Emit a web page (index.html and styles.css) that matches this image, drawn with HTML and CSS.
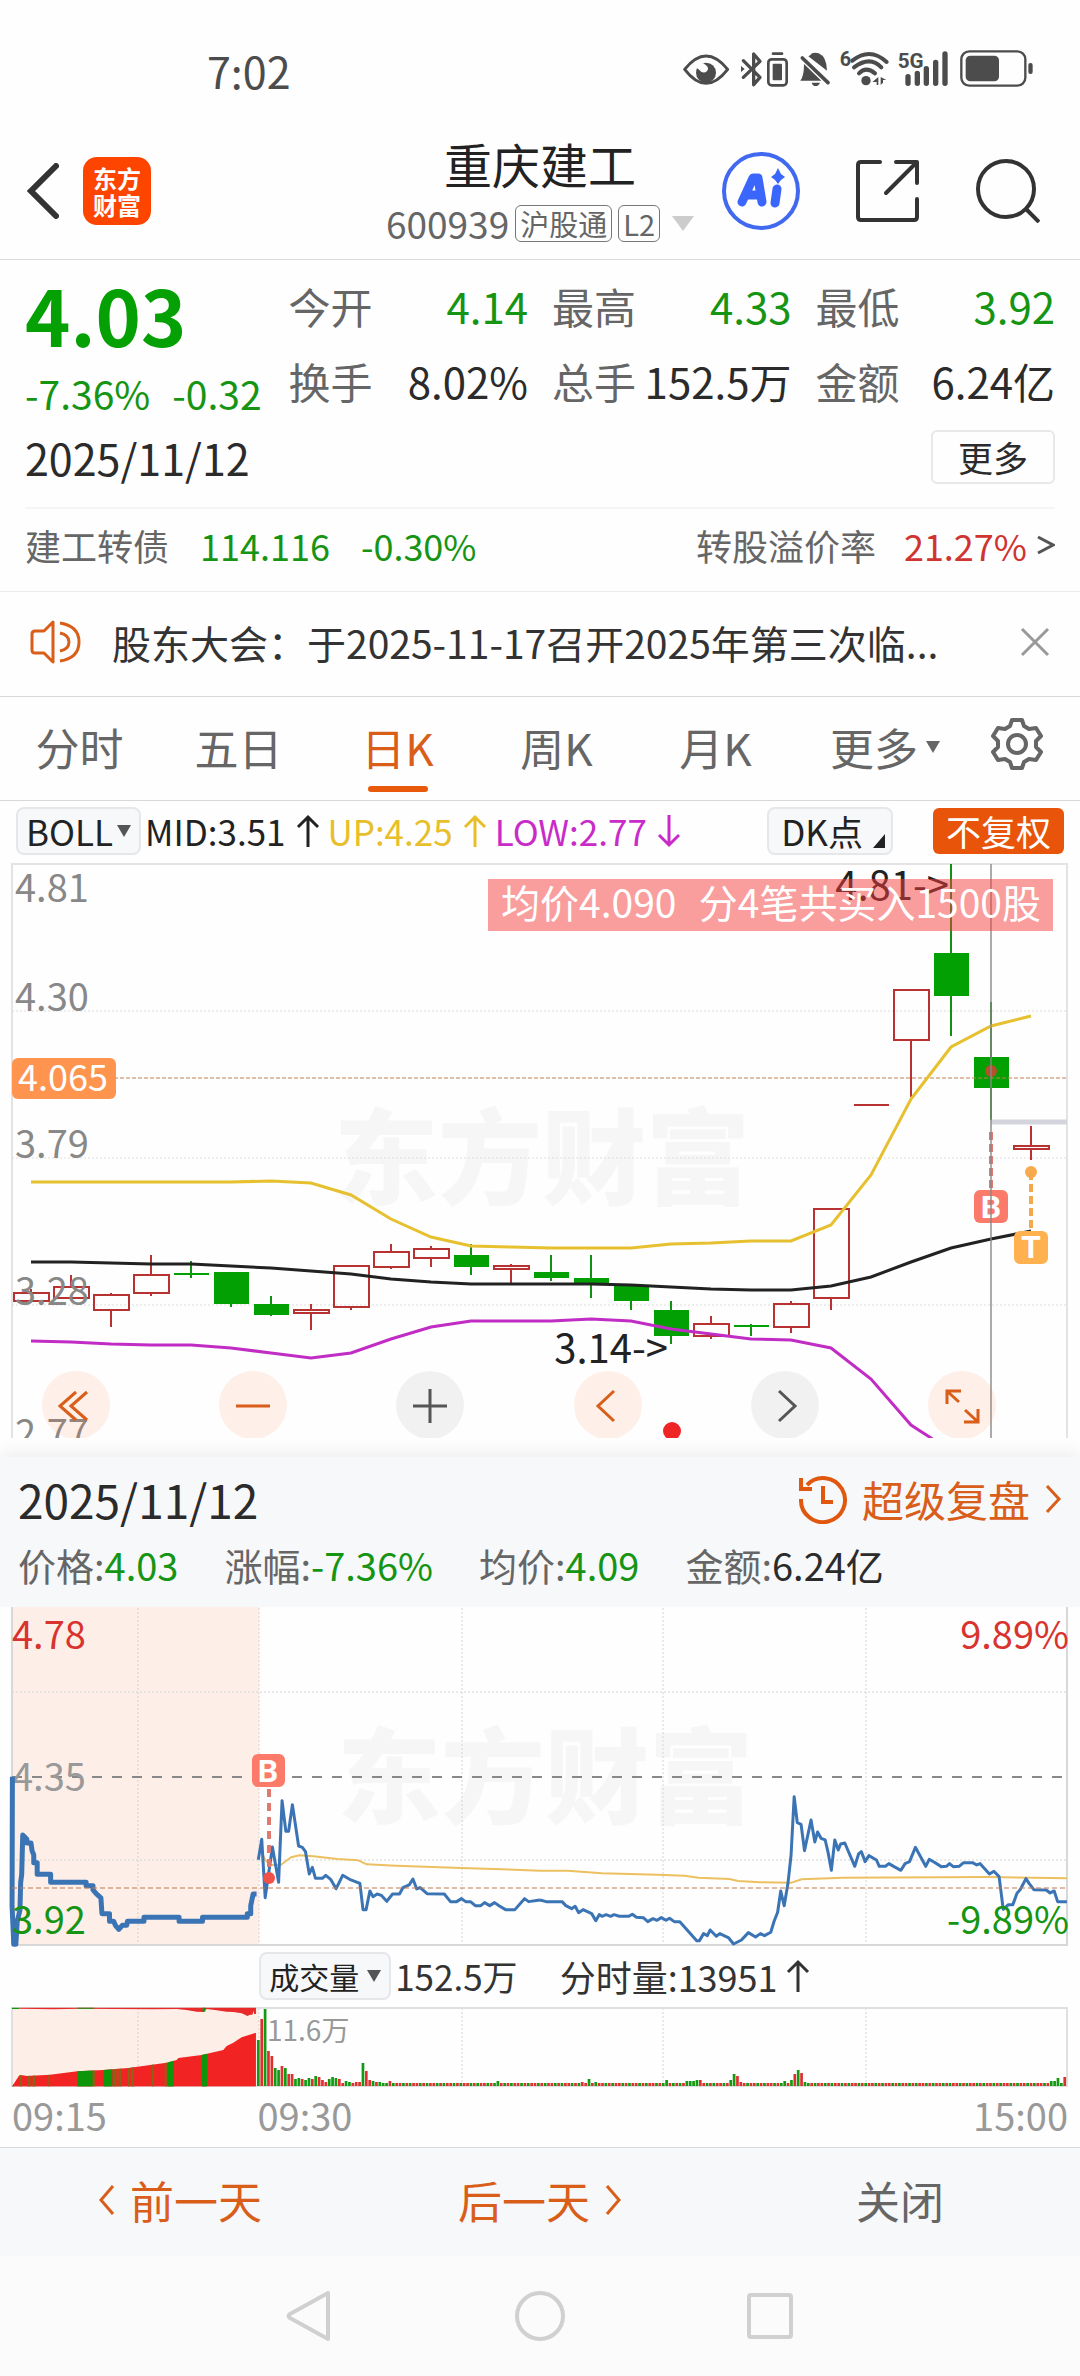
FILE: index.html
```html
<!DOCTYPE html>
<html lang="zh-CN">
<head>
<meta charset="utf-8">
<meta name="viewport" content="width=device-width, initial-scale=1">
<title>重庆建工 600939</title>
<link rel="stylesheet" href="styles.css">
</head>
<body>
<div class="status">
  <span class="clock">7:02</span>
  <svg class="status-icons" viewBox="0 0 1200 240" aria-hidden="true">
    <g fill="none" stroke="#4c4c4c" stroke-width="9" stroke-linecap="round" stroke-linejoin="round">
      <path d="M74 118Q138 38 203 118Q138 202 74 118Z"/>
      <path d="M250 92L300 142L281 164V72L300 94L250 142" stroke-width="10"/>
      <rect x="325" y="88" width="55" height="78" rx="10" stroke-width="8"/>
      <path d="M339 71H366" stroke-width="8"/>
      <path d="M427 84L504 158" stroke-width="11"/>
      <path d="M577 92Q630 50 680 96M582 112Q630 76 664 112M597 130Q618 108 645 130" stroke-width="12"/>
      <path d="M744 140V160M772 130V160M799 116V160M827 97V160M855 72V160" stroke-width="16"/>
      <rect x="904" y="64" width="192" height="103" rx="24" stroke-width="7"/>
    </g>
    <g fill="#4c4c4c">
      <circle cx="138" cy="128" r="30"/>
      <path d="M243 108L254 117L243 126Z"/>
      <rect x="338" y="101" width="28" height="50" rx="3"/>
      <path d="M432 102L484 152H421Q432 140 432 102ZM445 79Q452 76 456 70Q466 66 476 70Q500 80 501 122ZM455 158H480Q476 168 467 168Q458 168 455 158Z"/>
      <circle cx="618" cy="152" r="14"/>
      <path d="M655 141V165H650V156H637ZM662 165V141L679 150H669V158Z"/>
      <rect x="917" y="77" width="100" height="77" rx="14"/>
      <rect x="1105" y="99" width="13" height="33" rx="6"/>
    </g>
    <path d="M104 100H130Q150 112 142 122Q130 134 118 120Q112 112 104 116Z" fill="#fff"/>
    <text class="net" x="539" y="107" font-size="60">6</text>
    <text class="net" x="713" y="115" font-size="62">5G</text>
  </svg>
</div>

<header class="header">
  <div class="header-left">
    <button class="icon-btn" aria-label="返回"><svg width="32" height="56" viewBox="0 0 32 56"><path d="M29 3L4 28L29 53" fill="none" stroke="#333" stroke-width="6" stroke-linecap="round"/></svg></button>
    <a class="logo" href="#">东方<br>财富</a>
  </div>
  <div class="header-mid">
    <h1>重庆建工</h1>
    <div class="code"><span>600939</span><span class="badge">沪股通</span><span class="badge">L2</span><svg width="22" height="16" viewBox="0 0 22 16"><path d="M0 1H22L11 16Z" fill="#ccc"/></svg></div>
  </div>
  <div class="header-right">
    <button class="icon-btn" aria-label="AI"><svg width="78" height="78" viewBox="0 0 78 78"><circle cx="39" cy="39" r="37" fill="none" stroke="#4169f0" stroke-width="4"/><g fill="none" stroke="#3a66fb" stroke-width="9" stroke-linecap="round" stroke-linejoin="round"><path d="M20 50L31 26H36L40 50M26 43H38M55 37L53 51"/></g><path d="M56 16L59 22L63 25L59 28L56 32L53 28L49 25L53 22Z" fill="#3a66fb"/></svg></button>
    <button class="icon-btn" aria-label="分享"><svg width="64" height="64" viewBox="0 0 64 64"><path d="M24 3H5Q2 3 2 6V58Q2 61 5 61H58Q61 61 61 58V40M40 3H61V24M60 4L30 34" fill="none" stroke="#333" stroke-width="4" stroke-linecap="round" stroke-linejoin="round"/></svg></button>
    <button class="icon-btn" aria-label="搜索"><svg width="64" height="64" viewBox="0 0 64 64"><circle cx="30" cy="30" r="28" fill="none" stroke="#333" stroke-width="4"/><path d="M50 50L63 63" stroke="#333" stroke-width="4"/></svg></button>
  </div>
</header>

<section class="quote">
  <div class="quote-grid">
    <div class="now">
      <div class="price green">4.03</div>
      <div class="change green"><span>-7.36%</span><span>-0.32</span></div>
    </div>
    <dl>
      <div><dt>今开</dt><dd class="green">4.14</dd></div>
      <div><dt>换手</dt><dd>8.02%</dd></div>
    </dl>
    <dl>
      <div><dt>最高</dt><dd class="green">4.33</dd></div>
      <div><dt>总手</dt><dd>152.5万</dd></div>
    </dl>
    <dl>
      <div><dt>最低</dt><dd class="green">3.92</dd></div>
      <div><dt>金额</dt><dd>6.24亿</dd></div>
    </dl>
  </div>
  <div class="date-row"><span>2025/11/12</span><button class="more">更多</button></div>
  <a class="bond" href="#">
    <span>建工转债</span><span class="green">114.116</span><span class="green">-0.30%</span>
    <span class="push">转股溢价率</span><span class="red">21.27%</span><svg width="18" height="22" viewBox="0 0 18 22"><path d="M1 3L16 11L1 19" fill="none" stroke="#555" stroke-width="3"/></svg>
  </a>
</section>

<div class="news">
  <svg width="52" height="44" viewBox="0 0 52 44" fill="none" stroke="#d85e1a" stroke-width="3" stroke-linejoin="round"><path d="M23 2V42L14 33H5Q2 33 2 30V14Q2 11 5 11H14ZM30 3Q49 6 49 22Q49 38 30 41M30 13Q39 15 39 22Q39 29 30 31"/></svg>
  <a href="#">股东大会：于2025-11-17召开2025年第三次临...</a>
  <button class="icon-btn" aria-label="关闭公告"><svg width="30" height="30" viewBox="0 0 30 30"><path d="M2 2L28 28M28 2L2 28" stroke="#999" stroke-width="3"/></svg></button>
</div>

<nav class="tabs">
  <button>分时</button>
  <button>五日</button>
  <button class="active">日K</button>
  <button>周K</button>
  <button>月K</button>
  <button>更多<svg width="14" height="12" viewBox="0 0 14 12"><path d="M0 0H14L7 12Z" fill="#666"/></svg></button>
  <button aria-label="设置"><svg class="gear" width="52" height="52" viewBox="-26 -26 52 52" fill="none" stroke="#666" stroke-width="4" stroke-linejoin="round"><path d="M-7 -18L-5 -24H5L7 -18L12 -15L19 -16L24 -8L19 -3V3L24 8L19 16L12 15L7 18L5 24H-5L-7 18L-12 15L-19 16L-24 8L-19 3V-3L-24 -8L-19 -16L-12 -15Z"/><circle r="9"/></svg></button>
</nav>

<section class="kline">
  <div class="indicators">
    <label class="chip"><select aria-label="主图指标"><option>BOLL</option></select><svg width="14" height="12" viewBox="0 0 14 12"><path d="M0 0H14L7 12Z" fill="#555"/></svg></label>
    <span class="mid">MID:3.51<svg class="arrow" viewBox="0 0 24 34"><path d="M12 33V3M2 13L12 3L22 13"/></svg></span>
    <span class="up">UP:4.25<svg class="arrow" viewBox="0 0 24 34"><path d="M12 33V3M2 13L12 3L22 13"/></svg></span>
    <span class="low">LOW:2.77<svg class="arrow" viewBox="0 0 24 34"><path d="M12 1V31M2 21L12 31L22 21"/></svg></span>
    <button class="chip dk">DK点<svg width="12" height="14" viewBox="0 0 12 14"><path d="M12 0V14H0Z" fill="#222"/></svg></button>
    <button class="adjust">不复权</button>
  </div>
  <div class="chart-wrap">
    <svg class="chart" id="kchart" viewBox="0 861 1080 577" role="img" aria-label="日K线图">
      <text class="watermark" x="334" y="1197">东方财富</text>
      <g fill="none">
        <path d="M12 1440V864H1067V1440" stroke="#e3e3e3" stroke-width="2"/>
        <path d="M12 1011H1067M12 1158H1067M12 1305H1067" stroke="#ddd" stroke-width="1" stroke-dasharray="2 2"/>
      </g>
      <g id="candles"></g>
      <path d="M12 1078H1067" stroke="#c08050" stroke-width="1" stroke-dasharray="4 2"/>
      <g fill="none" stroke-width="3" id="boll"></g>
      <circle cx="991" cy="1071" r="6" fill="#b0522d"/>
      <path d="M991 1122H1067" stroke="#d4d5dc" stroke-width="5"/>
      <path d="M991 1132V1190" stroke="#dd7a72" stroke-width="4" stroke-dasharray="8 4"/>
      <rect x="974" y="1190" width="34" height="33" rx="6" fill="#fb7a6a"/>
      <text class="tag" x="991" y="1218">B</text>
      <circle cx="1031" cy="1172" r="6" fill="#f8ab4e"/>
      <path d="M1031 1172V1230" stroke="#f3a84c" stroke-width="4" stroke-dasharray="8 4"/>
      <rect x="1014" y="1231" width="34" height="33" rx="6" fill="#ffb04f"/>
      <text class="tag" x="1031" y="1258">T</text>
      <path d="M991 864V1440" stroke="#888" stroke-opacity=".7" stroke-width="2"/>
      <circle cx="672" cy="1431" r="9" fill="#ef2424"/>
      <g class="axis" fill="#888">
        <text x="15" y="902">4.81</text><text x="15" y="1011">4.30</text><text x="15" y="1158">3.79</text><text x="15" y="1305">3.28</text><text x="15" y="1447">2.77</text>
      </g>
      <text class="mark" x="949" y="900" text-anchor="end">4.81-&gt;</text>
      <text class="mark" x="668" y="1363" text-anchor="end">3.14-&gt;</text>
      <rect x="12" y="1058" width="104" height="41" rx="6" fill="#ff944f"/>
      <text x="18" y="1091" font-size="36" fill="#fff">4.065</text>
      <rect x="488" y="879" width="565" height="52" fill="#f33c3c" fill-opacity=".5"/>
      <text x="501" y="918" font-size="39" fill="#fff">均价4.090</text>
      <text x="1041" y="918" font-size="39" fill="#fff" text-anchor="end">分4笔共买入1500股</text>
    </svg>
    <div class="controls">
      <button aria-label="最早"><svg viewBox="0 0 68 68"><path d="M34 21L18 35L34 49M45 21L29 35L45 49"/></svg></button>
      <button aria-label="缩小"><svg viewBox="0 0 68 68"><path d="M17 35H51"/></svg></button>
      <button class="off" aria-label="放大"><svg viewBox="0 0 68 68"><path d="M17 35H51M34 18V52"/></svg></button>
      <button aria-label="向左"><svg viewBox="0 0 68 68"><path d="M40 20L24 35L40 50"/></svg></button>
      <button class="off" aria-label="向右"><svg viewBox="0 0 68 68"><path d="M28 20L44 35L28 50"/></svg></button>
      <button aria-label="全屏"><svg viewBox="0 0 68 68"><path d="M19 33V20H33M20 21L31 31M50 38V51H36M49 50L37 39"/></svg></button>
    </div>
  </div>
</section>

<section class="replay">
  <div class="replay-head">
    <div class="replay-title">
      <span>2025/11/12</span>
      <a href="#"><svg width="50" height="50" viewBox="0 0 50 50" fill="none" stroke="#e0570f" stroke-width="4"><path d="M9 11A22 22 0 1 1 3 25M3 4V15H14M25 12V28H35"/></svg>超级复盘<svg width="18" height="30" viewBox="0 0 18 30"><path d="M3 2L15 15L3 28" fill="none" stroke="#d85e1a" stroke-width="3"/></svg></a>
    </div>
    <div class="replay-stats">
      <span>价格:<b class="green">4.03</b></span>
      <span>涨幅:<b class="green">-7.36%</b></span>
      <span>均价:<b class="green">4.09</b></span>
      <span>金额:<b>6.24亿</b></span>
    </div>
  </div>

  <svg class="chart" viewBox="0 1607 1080 341" role="img" aria-label="分时走势图">
    <rect x="12" y="1607" width="247" height="338" fill="#fdeee8"/>
    <text class="watermark" x="337" y="1816">东方财富</text>
    <g fill="none">
      <path d="M138 1608V1945M259 1608V1945M462 1608V1945M663 1608V1945M866 1608V1945M12 1692H1067M12 1860H1067" stroke="#d4d4d4" stroke-width="1" stroke-dasharray="2 2"/>
      <path d="M12 1607V1945H1067V1607" stroke="#d8d8d8" stroke-width="2"/>
      <path d="M12 1777H1067" stroke="#888" stroke-width="2" stroke-dasharray="10 10"/>
    </g>
    <g class="axis"><text x="12" y="1791" fill="#999">4.35</text></g>
    <g class="trace" transform="translate(0 1600) scale(.3444 .3333)">
      <polyline class="auction" points="36,530 35,917 40,1033 46,1033 50,965 58,930 60,847 63,823 66,705 78,718 78,729 90,729 93,752 98,765 98,788 108,788 108,823 147,823 147,847 250,847 250,857 270,857 270,870 280,882 293,894 296,941 318,941 318,964 330,964 335,976 345,988 355,976 368,976 370,964 418,964 418,952 520,952 520,964 588,964 588,952 718,952 718,941 728,941 728,917 735,882 745,882"/>
      <polyline class="avg" points="755,745 770,780 785,795 815,795 845,772 870,766 910,769 980,777 1040,781 1065,793 1150,797 1340,804 1568,812"/>
      <polyline class="last" points="750,779 760,718 770,893 791,741 809,847 819,602 830,694 838,694 849,614 867,738 878,742 887,755 898,822 907,802 916,835 936,835 946,826 960,838 976,866 995,826 1015,838 1045,850 1054,929 1063,929 1074,873 1083,890 1095,882 1107,886 1123,904 1140,882 1160,882 1170,863 1188,855 1199,837 1210,867 1220,863 1240,881 1290,882 1308,905 1326,905 1340,896 1352,905 1366,905 1380,917 1396,917 1407,908 1422,917 1436,908 1450,918 1468,929 1495,929 1523,896 1535,905 1568,900"/>
    </g>
    <g class="trace" transform="translate(540 1600) scale(.3444 .3333)">
      <polyline class="avg" points="0,812 80,812 180,820 340,824 420,827 460,833 550,837 575,843 640,847 730,848 760,838 880,833 1300,831 1530,835"/>
      <polyline class="last" points="0,900 18,905 64,905 75,917 92,926 102,919 112,938 125,929 150,941 162,962 172,944 180,949 192,944 205,949 215,944 230,949 258,949 268,943 280,952 300,953 313,965 328,956 340,961 352,953 366,961 376,955 390,965 406,965 455,1022 463,1022 475,1001 486,1007 494,990 512,1009 522,1001 548,1014 562,1032 585,1020 605,998 626,1011 640,1001 652,1007 670,997 680,963 690,937 699,873 709,917 720,850 729,765 738,590 747,668 758,673 768,752 787,660 798,726 806,696 816,715 828,720 836,755 846,811 856,720 866,750 873,732 885,729 914,799 925,762 933,755 944,785 955,767 977,780 985,799 1003,799 1013,791 1028,800 1048,811 1060,791 1073,785 1090,742 1120,799 1130,778 1145,787 1165,800 1180,799 1189,791 1200,800 1217,799 1230,788 1256,788 1268,795 1278,791 1305,822 1318,814 1333,830 1345,928 1360,914 1373,914 1385,880 1395,868 1411,836 1420,850 1434,869 1470,870 1481,879 1493,873 1503,905 1530,905"/>
    </g>
    <path d="M12 1888H1067" stroke="#c07a50" stroke-width="1" stroke-dasharray="5 3"/>
    <path d="M269 1789V1878" stroke="#e07a70" stroke-width="4" stroke-dasharray="8 6"/>
    <circle cx="269" cy="1878" r="6" fill="#f0524a"/>
    <rect x="252" y="1754" width="33" height="33" rx="6" fill="#fb7a6a"/>
    <text class="tag" x="268" y="1782">B</text>
    <g class="axis">
      <text x="12" y="1649" fill="#d9332f">4.78</text>
      <text x="12" y="1934" fill="#169413">3.92</text>
      <text x="1069" y="1649" fill="#d9332f" text-anchor="end">9.89%</text>
      <text x="1069" y="1934" fill="#169413" text-anchor="end">-9.89%</text>
    </g>
  </svg>

  <div class="vol-legend">
    <label class="chip small"><select aria-label="副图指标"><option>成交量</option></select><svg width="14" height="12" viewBox="0 0 14 12"><path d="M0 0H14L7 12Z" fill="#555"/></svg></label>
    <span>152.5万</span>
    <span class="minute">分时量:13951<svg class="arrow" viewBox="0 0 24 34"><path d="M12 33V3M2 13L12 3L22 13"/></svg></span>
  </div>

  <svg class="chart" viewBox="0 2000 1080 88" role="img" aria-label="成交量图">
    <rect x="12" y="2008" width="247" height="78" fill="#fdeee8"/>
    <path d="M138 2008V2086M259 2008V2086M462 2008V2086M663 2008V2086M866 2008V2086" stroke="#d4d4d4" stroke-width="1" stroke-dasharray="2 2"/>
    <rect x="12" y="2008" width="1055" height="78" fill="none" stroke="#e0e0e0" stroke-width="2"/>
    <g transform="translate(0 1990) scale(.3333)">
      <clipPath id="area"><path d="M36 290L50 268L58 256H68L80 258L150 254L232 244L310 240L385 234L500 218L530 210L535 204L605 195L670 180L680 168L700 158L725 142L768 128V290Z"/></clipPath>
      <g clip-path="url(#area)">
        <rect x="36" y="100" width="732" height="190" fill="#f22323"/>
        <path fill="#0d960a" d="M36 100h6v190h-6zM232 100h46v190h-46zM311 100h26v190h-26zM503 100h19v190h-19zM606 100h15v190h-15z"/>
        <path fill="#8c6414" d="M60 100h6v190h-6zM83 100h8v190h-8zM98 100h7v190h-7zM145 100h4v190h-4zM280 100h5v190h-5zM340 100h7v190h-7zM350 100h5v190h-5zM358 100h6v190h-6zM384 100h6v190h-6zM393 100h9v190h-9zM456 100h5v190h-5zM494 100h6v190h-6z"/>
      </g>
      <path fill="#e82a2a" d="M58 53H768V72H762V62L757 74H751L742 78L735 74L725 70L700 66L680 65L650 61L620 57L610 66L590 65L560 60L530 57L460 58L240 56L160 58L58 56Z"/>
      <path fill="#0d960a" d="M36 53h22v4h-22zM232 53h50v3h-50zM608 53h8v12h-8z"/>
    </g>
    <g id="volume"></g>
    <text x="267" y="2041" font-size="28" fill="#999">11.6万</text>
  </svg>
  <div class="times"><span>09:15</span><span>09:30</span><span>15:00</span></div>

  <div class="days">
    <button><svg width="18" height="32" viewBox="0 0 18 32"><path d="M15 2L3 16L15 30"/></svg>前一天</button>
    <button>后一天<svg width="18" height="32" viewBox="0 0 18 32"><path d="M3 2L15 16L3 30"/></svg></button>
    <button class="close">关闭</button>
  </div>
</section>

<footer class="sysnav">
  <button class="icon-btn" aria-label="系统返回"><svg width="50" height="52" viewBox="0 0 50 52"><path d="M43 3V49L5 28Q2 26 5 24Z"/></svg></button>
  <button class="icon-btn" aria-label="主页"><svg width="50" height="52" viewBox="0 0 50 52"><circle cx="25" cy="26" r="23"/></svg></button>
  <button class="icon-btn" aria-label="最近任务"><svg width="50" height="52" viewBox="0 0 50 52"><rect x="4" y="5" width="42" height="42" rx="2"/></svg></button>
</footer>
<script src="charts.js"></script>
</body>
</html>
```
FILE: styles.css
```css
* { box-sizing: border-box; }
body {
  margin: 0;
  background: #fefefe;
  color: #2b2b2b;
  font-family: "Noto Sans CJK SC", "Noto Sans", sans-serif;
}
h1, dl, dd { margin: 0; font-weight: 400; }
button, select {
  font: inherit;
  color: inherit;
  border: 0;
  padding: 0;
  background: none;
  appearance: none;
}
a { color: inherit; text-decoration: none; }
svg { display: block; flex: none; }
.green { color: #169413; }
.red { color: #cf3430; }
.icon-btn { display: block; }

.status {
  display: flex;
  justify-content: space-between;
  align-items: center;
  padding: 30px 20px 20px 207px;
}
.clock { font-size: 43px; line-height: 48px; color: #4c4c4c; }
.status-icons { width: 400px; height: 80px; }
.net { fill: #4c4c4c; font-family: "Roboto", sans-serif; font-weight: 700; }

.header {
  display: grid;
  grid-template-columns: 1fr auto 1fr;
  align-items: center;
  padding: 5px 0 12px;
  border-bottom: 1px solid #d8d8d8;
}
.header-left { display: flex; align-items: center; gap: 24px; padding-left: 27px; }
.header-mid { text-align: center; }
.header-right { display: flex; align-items: center; justify-content: flex-end; gap: 56px; padding-right: 40px; }
.logo {
  width: 68px;
  padding: 7px 0;
  border-radius: 14px;
  background: #fd4500;
  color: #fff;
  font-size: 24px;
  font-weight: 700;
  line-height: 27px;
  text-align: center;
}
h1 { font-size: 48px; line-height: 56px; color: #222; margin-bottom: 8px; }
.code { display: flex; align-items: center; gap: 6px; font-size: 37px; line-height: 48px; color: #666; }
.badge { border: 1px solid #777; border-radius: 6px; padding: 0 4px; font-size: 29px; line-height: 35px; }
.code svg { margin-left: 6px; }

.quote { padding: 8px 25px 0; }
.quote-grid { display: grid; grid-template-columns: repeat(4, 1fr); column-gap: 24px; }
.price { font-size: 77px; font-weight: 700; line-height: 80px; padding-top: 6px; color: #04a004; }
.change { display: flex; gap: 22px; margin-top: 14px; font-size: 39px; line-height: 50px; white-space: nowrap; }
dl > div { display: flex; justify-content: space-between; font-size: 42px; line-height: 75px; white-space: nowrap; }
dt { color: #666; }
.date-row { display: flex; justify-content: space-between; align-items: center; margin-top: 12px; font-size: 43px; line-height: 54px; }
.more { border: 2px solid #e8e8e8; border-radius: 6px; padding: 0 25px; font-size: 35px; line-height: 50px; }
.bond {
  display: flex;
  align-items: center;
  margin-top: 23px;
  padding: 12px 0 22px;
  border-top: 2px solid #f5f5f5;
  font-size: 36px;
  line-height: 48px;
  color: #666;
  gap: 31px;
}
.bond .green { color: #169413; }
.bond .red { color: #cf3430; margin: 0 -21px 0 -3px; }
.push { margin-left: auto; }

.news {
  display: flex;
  align-items: center;
  padding: 22px 30px 26px;
  border-top: 1px solid #ececec;
  border-bottom: 1px solid #d8d8d8;
  font-size: 39px;
  line-height: 56px;
  color: #333;
}
.news a { flex: 1; min-width: 0; margin-left: 30px; white-space: nowrap; }

.tabs {
  display: grid;
  grid-template-columns: repeat(5, 159fr) 180fr 83fr;
  padding-right: 22px;
  border-bottom: 1px solid #d8d8d8;
  font-size: 44px;
  line-height: 64px;
  color: #666;
}
.tabs button { padding: 18px 0 8px; display: grid; grid-auto-flow: column; justify-content: center; justify-items: center; align-items: center; column-gap: 8px; }
.tabs button::after { content: ""; grid-row: 2; grid-column: 1 / -1; justify-self: center; width: 60px; height: 6px; margin-top: 7px; border-radius: 3px; }
.tabs .active { color: #d85e1a; }
.tabs .active::after { background: #e8590c; }

.indicators { display: flex; align-items: center; padding: 6px 16px 6px; font-size: 35px; line-height: 44px; white-space: nowrap; }
.chip {
  display: flex;
  align-items: center;
  gap: 4px;
  padding: 0 8px;
  border: 2px solid #e6e7ea;
  border-radius: 8px;
  background: #f7f8fa;
  color: #222;
}
.indicators span { display: flex; align-items: center; gap: 10px; margin-left: 8px; }
.indicators .mid { color: #222; margin-left: 4px; }
.indicators .up { color: #e8bf2a; }
.indicators .low { color: #c82bc8; }
.arrow { width: 24px; height: 34px; fill: none; stroke: currentColor; stroke-width: 3; }
.dk { margin-left: auto; padding: 0 6px 0 12px; gap: 10px; }
.dk svg { align-self: flex-end; margin-bottom: 5px; }
.adjust { margin-left: 40px; padding: 0 13px; border-radius: 6px; background: #e8540a; color: #fff; line-height: 46px; }

.chart { width: 100%; height: auto; }
.chart-wrap { position: relative; overflow: hidden; }
.watermark { font-size: 104px; font-weight: 900; fill: #f6f6f6; }
.axis { font-size: 38px; }
.mark { font-size: 40px; fill: #222; }
.tag { font-size: 32px; font-weight: 700; fill: #fff; text-anchor: middle; font-family: "Roboto", sans-serif; }
.controls { position: absolute; left: 42px; right: 84px; bottom: -1px; display: flex; justify-content: space-between; }
.controls button { width: 68px; height: 68px; border-radius: 50%; background: rgba(255, 110, 40, .1); color: #d85e1a; }
.controls .off { background: rgba(0, 0, 0, .05); color: #555; }
.controls svg { fill: none; stroke: currentColor; stroke-width: 3; }

.replay { margin-top: 19px; }
.replay-head { padding: 12px 18px 18px; background: #f7f8fa; box-shadow: 0 -4px 16px rgba(0, 0, 0, .07); clip-path: inset(-20px 0 0 0); }
.replay-title { display: flex; justify-content: space-between; font-size: 46px; line-height: 60px; margin-bottom: 12px; }
.replay-title a { display: flex; align-items: center; gap: 14px; font-size: 42px; color: #d85e1a; }
.replay-stats { display: flex; gap: 46px; font-size: 38px; line-height: 48px; color: #666; }
.replay-stats b { font-weight: 400; color: #2b2b2b; }
.replay-stats .green { color: #169413; }
.trace polyline { fill: none; stroke: #3b74b5; stroke-width: 3; vector-effect: non-scaling-stroke; stroke-linejoin: round; }
.trace .auction { stroke-width: 5; }
.trace .avg { stroke: #ecc060; stroke-width: 2; }

.vol-legend { display: flex; align-items: center; margin-top: 4px; padding-left: 24%; font-size: 35px; line-height: 44px; color: #333; }
.chip.small { font-size: 30px; gap: 8px; padding: 0 8px; margin-right: 4px; }
.minute { display: flex; align-items: center; gap: 8px; margin-left: 42px; font-size: 36px; }
.times { display: grid; grid-template-columns: 245fr 404fr 405fr; padding: 3px 12px 8px; font-size: 38px; line-height: 48px; color: #999; }
.times span:last-child { text-align: right; }

.days { display: grid; grid-template-columns: repeat(3, 1fr); border-top: 1px solid #d8d8d8; background: #f7f8fa; font-size: 44px; line-height: 108px; }
.days button { display: flex; justify-content: center; align-items: center; gap: 14px; line-height: 104px; padding-bottom: 4px; color: #d85e1a; }
.days .close { color: #666; }
.days svg { fill: none; stroke: currentColor; stroke-width: 3; }

.sysnav { display: flex; justify-content: center; gap: 180px; padding: 34px 0; background: #fbfbfb; }
.sysnav svg { fill: none; stroke: #d0d0d0; stroke-width: 4; stroke-linejoin: round; }
```
FILE: charts.js
```js
const NS = "http://www.w3.org/2000/svg";
function add(parent, name, attrs) {
  const el = document.createElementNS(NS, name);
  for (const key in attrs) el.setAttribute(key, attrs[key]);
  parent.appendChild(el);
}

// Daily candles: direction, then high, body top, body bottom, low on the chart's y scale.
const candles = [
  ["r", 1289, 1293, 1301, 1301], ["r", 1275, 1287, 1298, 1298], ["r", 1293, 1295, 1310, 1327],
  ["r", 1255, 1275, 1293, 1296], ["g", 1261, 1273, 1275, 1278], ["g", 1272, 1272, 1304, 1307],
  ["g", 1296, 1304, 1315, 1316], ["r", 1304, 1310, 1313, 1330], ["r", 1266, 1266, 1307, 1310],
  ["r", 1244, 1252, 1267, 1269], ["r", 1246, 1249, 1258, 1267], ["g", 1244, 1255, 1267, 1275],
  ["r", 1264, 1266, 1269, 1284], ["g", 1255, 1272, 1278, 1281], ["g", 1255, 1278, 1284, 1298],
  ["g", 1284, 1285, 1301, 1310], ["g", 1301, 1310, 1336, 1344], ["r", 1316, 1324, 1336, 1339],
  ["g", 1324, 1325, 1327, 1336], ["r", 1301, 1304, 1327, 1333], ["r", 1209, 1209, 1298, 1310],
  ["r", 1105, 1105, 1105, 1105], ["r", 990, 990, 1040, 1097], ["g", 864, 953, 996, 1036],
  ["g", 1002, 1057, 1088, 1120], ["r", 1126, 1146, 1149, 1160]
];
const centre = i => 31 + 40 * i;
const candleLayer = document.getElementById("candles");
candles.forEach(([dir, high, top, bottom, low], i) => {
  const x = centre(i);
  if (dir === "g") {
    add(candleLayer, "path", { d: `M${x} ${high}V${low}`, stroke: "#129012", "stroke-width": 2 });
    add(candleLayer, "rect", { x: x - 17, y: top, width: 35, height: bottom - top, fill: "#03a003" });
  } else {
    add(candleLayer, "path", {
      d: `M${x} ${high}V${top}M${x} ${bottom}V${low}M${x - 17} ${top}H${x + 18}V${bottom}H${x - 17}Z`,
      fill: "none", stroke: "#b83232", "stroke-width": 2
    });
  }
});

const bands = {
  "#e6c02e": [1182, 1182, 1182, 1182, 1182, 1182, 1181, 1183, 1195, 1219, 1237, 1246, 1247, 1248, 1248, 1248, 1244, 1243, 1241, 1241, 1225, 1175, 1099, 1047, 1026, 1016],
  "#222": [1262, 1262, 1263, 1264, 1264, 1266, 1268, 1271, 1274, 1279, 1282, 1284, 1284, 1284, 1284, 1285, 1287, 1289, 1290, 1290, 1286, 1277, 1262, 1248, 1239, 1231],
  "#c02cc4": [1341, 1342, 1344, 1345, 1345, 1348, 1353, 1358, 1353, 1339, 1327, 1321, 1321, 1321, 1319, 1321, 1329, 1334, 1339, 1340, 1348, 1379, 1425, 1451]
};
for (const colour in bands) {
  add(document.getElementById("boll"), "polyline", {
    points: bands[colour].map((y, i) => `${centre(i)},${y}`).join(" "), stroke: colour
  });
}

// One volume bar per trading minute; quiet minutes keep the base height.
const opening = "g46 r67 g77 r35 r30 g18 g16 r20 g18 r12 r12 g7 g8 r7 g6 g8 r7 g10 r9 r6 r4 g7 g9 g8 r7 r3 g5 g4 r3 r4 r4 g23 r15 r6 g5 r4 g4 g3 g3 r5".split(" ");
const spikes = { 71: "g5", 96: "r4", 98: "g7", 100: "g4", 121: "g6", 127: "g5", 128: "g5", 129: "g5", 130: "g6", 131: "r6", 140: "g6", 141: "g12", 142: "r10", 143: "r4", 156: "g5", 158: "g6", 159: "r12", 160: "g16", 161: "r13", 162: "g4", 235: "g5", 236: "g5", 237: "g8", 239: "r9" };
const volumeLayer = document.getElementById("volume");
for (let i = 0; i < 240; i++) {
  const bar = opening[i] || spikes[i] || ((i * 7) % 5 < 2 ? "g3" : "r3");
  const h = Number(bar.slice(1));
  add(volumeLayer, "rect", {
    x: 257 + i * 3.374, y: 2086 - h, width: 2.7, height: h,
    fill: bar[0] === "g" ? "#129a12" : "#dd3030"
  });
}
```
